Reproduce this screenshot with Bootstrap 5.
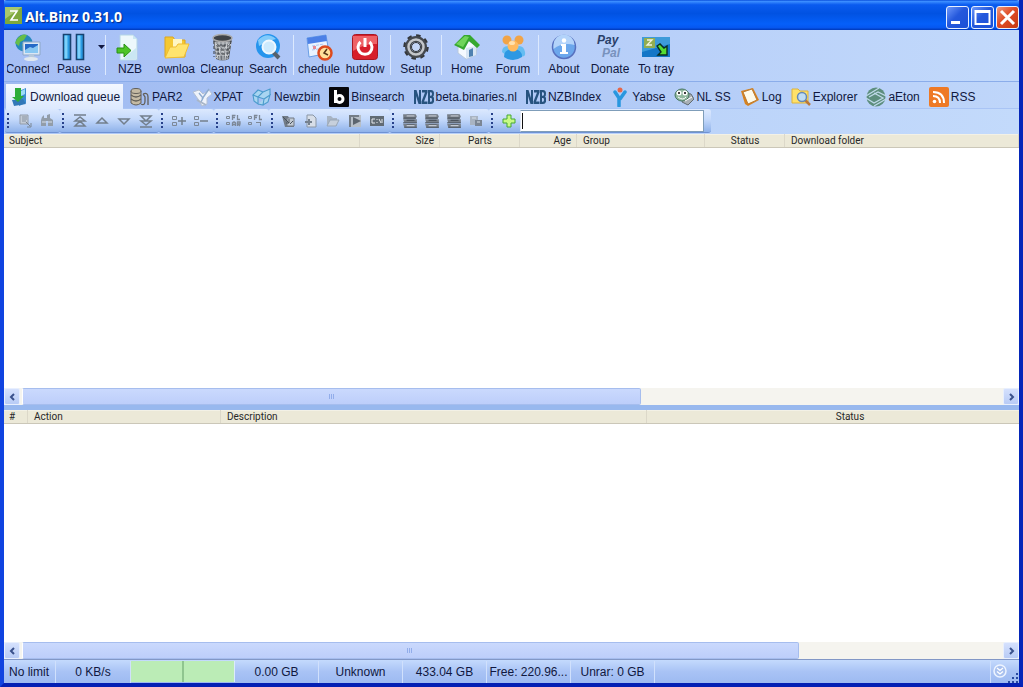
<!DOCTYPE html>
<html lang="en">
<head>
<meta charset="utf-8">
<meta name="viewport" content="width=device-width, initial-scale=1">
<title>Alt.Binz 0.31.0</title>
<link href="https://cdn.jsdelivr.net/npm/bootstrap@5.3.0/dist/css/bootstrap.min.css" rel="stylesheet">
<style>
body{font:12px/16px "Liberation Sans",Arial,sans-serif;color:#101840;background:#0a35d0}
.app-window{border:4px solid #0831d9;border-top:0;border-left-color:#1043e0;border-right-color:#0526b8;border-bottom-color:#0420b4;background:#b4cdf9}
.title-bar{height:30px;margin:0 -4px;padding:0 4px 0 5px;background:linear-gradient(#0a4fdc 0,#3a8cff 5%,#0a5bef 16%,#0152e2 45%,#0560fa 80%,#0657f0 92%,#0038b8);border-radius:7px 7px 0 0}
.title-text{font:bold 14px/18px "Noto Sans","Open Sans",sans-serif;color:#fff;text-shadow:1px 1px 1px #0a2a80;margin-left:3px}
.win-btns{gap:2px}
.win-btn{width:23px;height:23px;border:1px solid #e8f0ff;border-radius:3px;background:linear-gradient(135deg,#6d98fb,#2458dc 45%,#1c50d6)}
.win-btn.close-btn{background:linear-gradient(135deg,#f09a7c,#df4c25 45%,#c63a12)}
button{border:0;background:none;padding:0;color:inherit}
.main-bar{height:51px;padding:3px 1px 0;background:linear-gradient(90deg,#a6bff5,#c2d9fb)}
.tool{width:46px;padding:0 2px;height:47px}
.tool svg{width:30px;height:30px}
.tool-label{width:42px;height:16px;line-height:12px}
.bar-sep{width:1px;height:40px;margin:2px 2px 0;background:#dce9fe}
.bar-sep.after-menu{margin:2px 1px 0 0}
.drop-btn{width:8px;height:28px}
.tab-strip{height:28px;padding:2px 2px 0;gap:5px;background:linear-gradient(90deg,#9fbaf1,#bfd6fa);border-top:1px solid #8badea;border-bottom:1px solid #a9c4f5}
.tab-item{padding:2px;gap:2px;color:#101840;text-decoration:none;height:25px}
.tab-item.current{background:linear-gradient(#f4f8ff,#dde9fe);padding-right:3px}
.tab-item svg{width:20px;height:20px}
.sub-strip{height:25px;padding:0 1px;background:linear-gradient(90deg,#abc6f6,#c3dafb)}
.sub-group{height:24px;padding:0 2px 0 9px;border-radius:2px 3px 3px 2px;background:linear-gradient(#dce9fe,#c4d9fb 45%,#8fb2ea);border-bottom:1px solid #6f92d4;position:relative}
.sub-group::before{content:"";position:absolute;left:2px;top:4px;bottom:4px;border-left:2px dotted #27418a}
.sub-group button{width:22px;height:22px}
.sub-group svg{width:16px;height:16px}
.search-box{width:184px;height:22px;border:1px solid #7f9db9;border-left-color:#e0e8f8;padding:0 2px;margin-right:5px;outline:0;caret-color:transparent;background:linear-gradient(#101010,#101010) 1px 2px/1px 16px no-repeat #fff}
.grid-head{table-layout:fixed;border-collapse:separate;border-spacing:0;color:#282828;font:10px/12px Roboto,"Liberation Sans",sans-serif}
.grid-head th{font-weight:400;height:14px;padding:1px 6px 0;background:#ece9d8;border-bottom:1px solid #cbc7b8;box-shadow:inset -1px 0 #dcd8c9,inset 0 1px #f3f1e6}
.grid-head th:first-child{padding-left:5px}
.c80{width:80px}.c57{width:57px}.c128{width:128px}.c356{width:356px}.c24{width:24px}.c193{width:193px}.c426{width:426px}.c406{width:406px}
.wide-table{width:1049px}
.queue-pane{flex:254 1 0}.log-pane{flex:232 1 0}
.scroll-row{height:17px;background:#f5f4ef}
.scroll-btn{width:16px;height:17px;background:linear-gradient(#d5e1fd,#b8cbf6);border:1px solid #e8effe;border-radius:2px}
.thumb{height:17px;margin-left:2px;background:linear-gradient(#cad9fd,#bdcefa);border:1px solid #a6bdee;border-left-color:#fff;border-radius:2px}
.thumb-queue{width:63%}.thumb-log{width:79%}
.thumb i{width:1px;height:5px;background:#92adea;margin-right:1px}
.splitter{height:5px;background:#98b8ee}
.status-bar{height:24px;border-top:1px solid #8297c6;background:linear-gradient(#c4dafd,#a9c3f5 50%,#9dbaf1)}
.stat{width:84px;line-height:22px;border-right:1px solid #d0e0fc}
.stat.first-stat{width:52px;padding-left:5px}.stat.speed-stat{width:75px}
.meter{width:104px;height:21px;background:linear-gradient(90deg,#bbecb6 50%,#8fc58f 50%,#8fc58f 51%,#bbecb6 51%);border-right:1px solid #dcebfc}
.end-box{border-left:1px solid #d0e0fc}
</style>
</head>
<body>
<svg class="d-none">
 <symbol id="lib" viewBox="1 1 14 14"><path d="M2 2h11l1 2-1 2h-10l-1-2zM2 6.500h12v3H3zM2 10.500h12v3.500H3z" fill="#777f89"/><path d="M2 5.500h11M2 9.500h12M3 13.500h11M5 3h7M5 7.500h7M5 11.500h7" stroke="#4d555f"/><path d="M5 3.500h7M5 12h7" stroke="#c3c9d2"/></symbol>
 <symbol id="nzb" viewBox="0 0 20 20"><path d="M0 3h2.500L5 11V3h2v14H4.500L2 9v8H0zM8 3h5.500v2.500L10 14.500h3.500V17H7.500v-2.500L11 5.500H8z" fill="#27537f"/><path d="M14 3h3q3 0 3 3.500 0 2.500-1 3 1.200.8 1.200 3.500 0 4-3.200 4h-3zM16 5.300v3.400h1q1 0 1-1.700t-1-1.700zM16 11v3.700h1q1 0 1-1.900T17 11z" fill="#27537f" fill-rule="evenodd"/></symbol>
 <symbol id="blocks" viewBox="0 0 16 16"><path d="M1.500 3.500h4v3h-4zM1.500 9.500h4v3h-4z" fill="none" stroke="#7d8897"/></symbol>
 <symbol id="letters" viewBox="0 0 16 16"><path d="M.5 3.500h3v2h-3zM.5 9.500h3v2h-3z" fill="none" stroke="#7d8897"/><path d="M6.500 7V2.500h3M6.500 4.500h2.500M11.500 2v4.500H14" fill="none" stroke="#7d8897" stroke-width="1.300"/></symbol>
</svg>
<main class="app-window d-flex flex-column vh-100 overflow-hidden">
<header class="title-bar d-flex align-items-center flex-shrink-0">
 <svg width="17" height="17" viewBox="0 0 17 17"><path d="M0 0h17v17H0z" fill="#7ea83d"/><path d="M0 0h17L0 12z" fill="#a8c76e"/><path d="M5 4h7L6 13h7" fill="none" stroke="#fff" stroke-width="1.600"/></svg>
 <h1 class="title-text mb-0 mt-1 flex-grow-1">Alt.Binz 0.31.0</h1>
 <div class="win-btns d-flex pt-1">
  <button class="win-btn d-flex" aria-label="Minimize"><svg width="21" height="21"><path d="M4 14h9v3H4z" fill="#fff"/></svg></button>
  <button class="win-btn d-flex" aria-label="Maximize"><svg width="21" height="21"><path d="M3.500 4h14v13h-14z" fill="none" stroke="#fff" stroke-width="2"/><path d="M3 4.500h15" stroke="#fff" stroke-width="3"/></svg></button>
  <button class="win-btn close-btn d-flex" aria-label="Close"><svg width="21" height="21"><path d="M4 4l13 13M17 4L4 17" stroke="#fff" stroke-width="3"/></svg></button>
 </div>
</header>

<nav class="main-bar d-flex flex-shrink-0" aria-label="Main toolbar">
 <button class="tool d-flex flex-column align-items-center"><svg viewBox="0 0 30 30"><circle cx="11" cy="10" r="8.500" fill="#2688bd"/><path d="M4 6q5-6 10-4l-3 5-4 2-1 4-4-3zM9 11l5 2-2 5z" fill="#67bd49"/><path d="M10 9h17v13H10z" fill="#dbe7f4" stroke="#8ea7c8"/><path d="M12 11h13v9H12z" fill="#2469c6"/><path d="M12 17l5-3 3 1 5-3v8H12z" fill="#88c7f2"/><path d="M16 22h5l1 3h-7z" fill="#b7c9db"/><ellipse cx="18" cy="26" rx="7" ry="2" fill="#e1e8ef"/></svg><span class="tool-label d-flex justify-content-center overflow-hidden text-nowrap"><span>Connect</span></span></button>
 <button class="tool d-flex flex-column align-items-center"><svg viewBox="0 0 30 30"><path d="M4.500 1.500h7v25h-7zM17.500 1.500h7v25h-7z" fill="#2a9be3" stroke="#174370" stroke-width="1.600"/><path d="M5.500 2.500h3v23h-3zM18.500 2.500h3v23h-3z" fill="#7bd0fa"/></svg><span class="tool-label d-flex justify-content-center"><span>Pause</span></span></button>
 <button class="drop-btn" aria-label="Pause options"><svg width="7" height="5"><path d="M0 0h7L3.500 4z" fill="#101840"/></svg></button><span class="bar-sep after-menu"></span>
 <button class="tool d-flex flex-column align-items-center"><svg viewBox="0 0 30 30"><path d="M5 2h13l4 4v21H5z" fill="#edf8fc" stroke="#b3d5e6"/><path d="M18 2v4h4M8 26l13-11v11z" fill="#cae7f3"/><path d="M2 15h7v-4l7 6.500-7 6.500v-4H2z" fill="#4ec427" stroke="#289015"/></svg><span class="tool-label d-flex justify-content-center"><span>NZB</span></span></button>
 <button class="tool d-flex flex-column align-items-center" title="Downloads"><svg viewBox="0 0 30 30"><path d="M4 4h8l2 3h10v17H4z" fill="#f4c832" stroke="#dda51c"/><path d="M12 6h9v8h-9z" fill="#fff6c2"/><path d="M4 25l5-11h6l2-3h11l-5 13z" fill="#ffe46e" stroke="#efbd32"/></svg><span class="tool-label d-flex justify-content-center text-nowrap"><span>ownloa</span></span></button>
 <button class="tool d-flex flex-column align-items-center"><svg viewBox="0 0 30 30"><path d="M6 5h19l-3 21q-7 3-13 0z" fill="#6b7077"/><path d="M8 9l3 17M12 9l1 18M16 9v18M20 9l-2 18M24 9l-4 17M7 10h17M7 14h16M8 18h15M8 22h14M8 26l14-15M9 11l13 14" stroke="#d0d3d6"/><path d="M7 8v16M24 8l-3 17M10 13h11M9 17h13M10 21h11" stroke="#34383c" stroke-dasharray="3 2"/><ellipse cx="15.500" cy="5" rx="9.500" ry="3.500" fill="#3f4347" stroke="#aaa" stroke-width="1.500"/></svg><span class="tool-label d-flex justify-content-center overflow-hidden text-nowrap"><span>Cleanup</span></span></button>
 <button class="tool d-flex flex-column align-items-center"><svg viewBox="0 0 30 30"><circle cx="15" cy="13" r="12" fill="#2695ed"/><path d="M5 7q9-9 18-1l-7 2-10 5z" fill="#83cbfa"/><path d="M20 19l6 6" stroke="#56616d" stroke-width="4"/><circle cx="16" cy="14" r="6.500" fill="#cdeafd" stroke="#eef8ff" stroke-width="2"/></svg><span class="tool-label d-flex justify-content-center"><span>Search</span></span></button>
 <span class="bar-sep"></span>
 <button class="tool d-flex flex-column align-items-center" title="Scheduler"><svg viewBox="0 0 30 30"><path d="M3 5l19-3 3 18-20 4z" fill="#e9f3ff" stroke="#6a9fe6"/><path d="M3 5l19-3 1 6L4 11z" fill="#4c80e6"/><path d="M8 13l12-2M8 17l12-2" stroke="#aec5ed" stroke-dasharray="3 1"/><path d="M9 13h3v3H9z" fill="#e58a96"/><circle cx="21" cy="20" r="6.500" fill="#ffe09b" stroke="#dc4b1e" stroke-width="2.500"/><path d="M23 16l-3 4 4 2" fill="none" stroke="#563519" stroke-width="1.500"/></svg><span class="tool-label d-flex justify-content-center text-nowrap"><span>chedule</span></span></button>
 <button class="tool d-flex flex-column align-items-center" title="Shutdown"><svg viewBox="0 0 30 30"><rect x="2.500" y="1.500" width="25" height="25" rx="3" fill="#d71f2b" stroke="#a71824"/><path d="M3 3h24v8Q15 10 3 18z" fill="#ee6267"/><path d="M10.500 9a7 7 0 1 0 9 0M15 5v9" fill="none" stroke="#fff" stroke-width="3"/></svg><span class="tool-label d-flex justify-content-center text-nowrap"><span>hutdow</span></span></button>
 <span class="bar-sep"></span>
 <button class="tool d-flex flex-column align-items-center"><svg viewBox="0 0 30 30"><circle cx="15" cy="14" r="11" fill="none" stroke="#33363a" stroke-width="3.500" stroke-dasharray="4.300 4.300"/><circle cx="15" cy="14" r="8" fill="none" stroke="#45494e" stroke-width="6"/><circle cx="15" cy="14" r="7.500" fill="none" stroke="#c4c7cb" stroke-width="2.500"/><circle cx="15" cy="14" r="4.500" fill="#c4d6f7" stroke="#333"/></svg><span class="tool-label d-flex justify-content-center"><span>Setup</span></span></button>
 <span class="bar-sep"></span>
 <button class="tool d-flex flex-column align-items-center"><svg viewBox="0 0 30 30"><path d="M6 12l9-5 10 6-1 9-10 4-8-6z" fill="#f5f9ff" stroke="#b9c9dc"/><path d="M14 15v11l10-4v-9z" fill="#d9e6f4"/><path d="M17 17l4-2v8l-4 1z" fill="#4f81b0"/><path d="M2 12L12 2l6 0 10 10-3 3-8-7-5 9z" fill="#36a82f"/><path d="M4 11l9-8 4 1-6 10z" fill="#70d45a"/></svg><span class="tool-label d-flex justify-content-center"><span>Home</span></span></button>
 <button class="tool d-flex flex-column align-items-center"><svg viewBox="0 0 30 30"><path d="M4 19q0-6 6-6t5 6-5 4-6-4M16 19q0-6 5-6t6 6-5 4-6-4" fill="#65bdf1"/><circle cx="9" cy="7" r="4.500" fill="#f1a447"/><circle cx="21" cy="7" r="4.500" fill="#f1a447"/><path d="M6 24q0-8 9-8t9 8q-9 6-18 0" fill="#2d98e3"/><circle cx="15" cy="13" r="5.500" fill="#ffba60"/><ellipse cx="14" cy="10" rx="3" ry="2" fill="#ffe0ad"/></svg><span class="tool-label d-flex justify-content-center"><span>Forum</span></span></button>
 <span class="bar-sep"></span>
 <button class="tool d-flex flex-column align-items-center"><svg viewBox="0 0 30 30"><circle cx="15" cy="14" r="11.500" fill="#6ca7ec" stroke="#5770be" stroke-width="1.500"/><path d="M4.500 12a10.500 10.500 0 0 1 21 0q-12-3-21 4z" fill="#b3d3fa"/><circle cx="15" cy="7.500" r="2.200" fill="#fff"/><path d="M12 11h5v8h2v2h-8v-2h2v-6h-1z" fill="#fff"/></svg><span class="tool-label d-flex justify-content-center"><span>About</span></span></button>
 <button class="tool d-flex flex-column align-items-center"><svg viewBox="0 0 30 30" font-family="Liberation Sans,sans-serif" font-size="12" font-weight="bold" font-style="italic"><text x="2" y="11" fill="#293f69">Pay</text><text x="7" y="24" fill="#7892bd">Pal</text></svg><span class="tool-label d-flex justify-content-center"><span>Donate</span></span></button>
 <button class="tool d-flex flex-column align-items-center"><svg viewBox="0 0 30 30"><path d="M1 4h28v20H1z" fill="#1476c7"/><path d="M1 4h28v7L1 19z" fill="#3d9bd9"/><path d="M3 5h11v10H3z" fill="#92ad50"/><path d="M6 7h5l-5 5h5" fill="none" stroke="#f3f5dd" stroke-width="1.300"/><path d="M16 13l3-2 4 4 3-2v9h-9l3-3z" fill="#54dc31" stroke="#092e20" stroke-width="1.400"/></svg><span class="tool-label d-flex justify-content-center text-nowrap"><span>To tray</span></span></button>
</nav>

<nav class="tab-strip d-flex flex-shrink-0 text-nowrap" aria-label="Views">
 <a href="#" class="tab-item current d-flex align-items-center" aria-current="page"><svg viewBox="0 0 20 20"><path d="M11 4l7-3v15l-7 3z" fill="#3a8bd0"/><path d="M4 13l11-1 3 5-12 2z" fill="#3278b8"/><path d="M13 4l4-2v5l-4 2z" fill="#9bdcf7"/><path d="M7 1h6v8h3l-6 6-6-5h3z" fill="#2dad38"/></svg><span>Download queue</span></a>
 <a href="#" class="tab-item d-flex align-items-center"><svg viewBox="0 0 20 20"><g fill="#c4baa4" stroke="#625f58"><path d="M1 4v12q5 4 10 0V4z"/><ellipse cx="6" cy="4" rx="5" ry="2.500"/><path d="M1 8q5 4 10 0M1 12q5 4 10 0M13 7q5-2 5 3v8M11 17q4 2 4-3v-4l-2-3" fill="none" stroke-width="1.300"/></g></svg><span>PAR2</span></a>
 <a href="#" class="tab-item d-flex align-items-center"><svg viewBox="0 0 20 20"><path d="M1 5l6-2 4 4 6-4 3 4-5 4v6l-5 2-4-7z" fill="#eef3fb" stroke="#b4c0d3"/><path d="M7 6l4 5-2 4M17 2l-7 10" fill="none" stroke="#8eacd0" stroke-width="1.400"/><path d="M5 13l9 5" stroke="#a9b6c8" stroke-width="2"/></svg><span>XPAT</span></a>
 <a href="#" class="tab-item d-flex align-items-center"><svg viewBox="0 0 20 20"><path d="M1 8l5-5 5 2-5 5zM6 10v7l-4-3-1-6M11 5l7-3v6l-6 4-6-2M12 12l-1 6-5-1M12 12l6-4-2 7-5 3" fill="#a8d5f1" stroke="#4b9bcd" stroke-width="1.100"/></svg><span>Newzbin</span></a>
 <a href="#" class="tab-item d-flex align-items-center"><svg viewBox="0 0 20 20"><rect width="20" height="20" rx="1" fill="#06070b"/><path d="M5 3h3v13H5z" fill="#fff"/><circle cx="10.500" cy="12" r="3.500" fill="none" stroke="#fff" stroke-width="3"/></svg><span>Binsearch</span></a>
 <a href="#" class="tab-item d-flex align-items-center"><svg><use href="#nzb"/></svg><span>beta.binaries.nl</span></a>
 <a href="#" class="tab-item d-flex align-items-center"><svg><use href="#nzb"/></svg><span>NZBIndex</span></a>
 <a href="#" class="tab-item d-flex align-items-center"><svg viewBox="0 0 20 20"><path d="M5 5l4 6v8M15 5l-5 7" stroke="#2897df" stroke-width="3.500" stroke-linecap="round" fill="none"/><circle cx="10" cy="3" r="2.500" fill="#e66749"/></svg><span>Yabse</span></a>
 <a href="#" class="tab-item d-flex align-items-center"><svg viewBox="0 0 20 20"><path d="M11 6l6 1 3 5-6 6-6-3z" fill="#a8b0b5" stroke="#616b72"/><ellipse cx="8" cy="8" rx="7" ry="6" fill="#91b99f" stroke="#477660"/><circle cx="5" cy="6" r="2.500" fill="#fff"/><circle cx="11" cy="6" r="2.500" fill="#fff"/><circle cx="5" cy="6" r="1"/><circle cx="11" cy="6" r="1"/><path d="M4 10q5 4 8 0M11 14l7-4" fill="none" stroke="#fff"/></svg><span>NL SS</span></a>
 <a href="#" class="tab-item d-flex align-items-center"><svg viewBox="0 0 20 20"><path d="M1 4l12-3 6 12-11 6-3-2z" fill="#d8821d"/><path d="M3 5l9-3 5 11-9 4z" fill="#fffbea" stroke="#bb7c35"/></svg><span>Log</span></a>
 <a href="#" class="tab-item d-flex align-items-center"><svg viewBox="0 0 20 20"><path d="M1 2h6l2 2h8v12H1z" fill="#ffe169" stroke="#deb33a"/><path d="M14 13l5 5" stroke="#b9783b" stroke-width="2.500"/><circle cx="11" cy="10" r="4.500" fill="#bfddf5" stroke="#6589b6" stroke-width="1.500"/></svg><span>Explorer</span></a>
 <a href="#" class="tab-item d-flex align-items-center"><svg viewBox="0 0 20 20"><circle cx="10" cy="10" r="9.500" fill="#5d8e7e"/><path d="M0 9L13 1M3 10l9-5 8 4M0 11l8 5 9-5-9-5M8 19l12-7" fill="none" stroke="#bfd9e9" stroke-width="1.300"/></svg><span>aEton</span></a>
 <a href="#" class="tab-item d-flex align-items-center"><svg viewBox="0 0 20 20"><rect width="20" height="20" rx="2" fill="#ee7925"/><circle cx="5.500" cy="14.500" r="1.800" fill="#fff"/><path d="M4 9q7 0 7 7M4 5q11 0 11 11" fill="none" stroke="#fff" stroke-width="2"/></svg><span>RSS</span></a>
</nav>

<div class="sub-strip d-flex flex-shrink-0" role="toolbar" aria-label="Queue tools">
 <div class="sub-group d-flex align-items-center">
  <button aria-label="Properties"><svg viewBox="0 0 16 16"><path d="M3 2h8v9H3z" fill="#c3cbd6" stroke="#929ba8"/><path d="M5 4h5M5 6h5M5 8h4" stroke="#8893a1"/><path d="M9 9l4 4m1-3v4h-4" stroke="#7b8591" fill="none"/></svg></button>
  <button aria-label="Find"><svg viewBox="0 0 16 16"><path d="M3 4l2-2v3h3V2l3-1v4l3 2v6H9V8H7v5H2V7z" fill="#929da9"/><path d="M3 9h4M9 9h4" stroke="#d8e0ea"/></svg></button>
 </div>
 <div class="sub-group d-flex align-items-center">
  <button aria-label="Move to top"><svg viewBox="0 0 16 16" fill="none" stroke="#737f8c" stroke-width="1.500"><path d="M2 2h12M8 4L3 8h10zM8 8l-5 5h10z"/></svg></button>
  <button aria-label="Move up"><svg viewBox="0 0 16 16"><path d="M8 5l-5 5h10z" fill="none" stroke="#737f8c" stroke-width="1.500"/></svg></button>
  <button aria-label="Move down"><svg viewBox="0 0 16 16"><path d="M8 11L3 6h10z" fill="none" stroke="#737f8c" stroke-width="1.500"/></svg></button>
  <button aria-label="Move to bottom"><svg viewBox="0 0 16 16" fill="none" stroke="#737f8c" stroke-width="1.500"><path d="M2 14h12M8 12L3 8h10zM8 8L3 3h10z"/></svg></button>
 </div>
 <div class="sub-group d-flex align-items-center">
  <button aria-label="Expand all"><svg viewBox="0 0 16 16"><use href="#blocks"/><path d="M7 8h8M11 4v8" stroke="#737f8c" stroke-width="1.500"/></svg></button>
  <button aria-label="Collapse all"><svg viewBox="0 0 16 16"><use href="#blocks"/><path d="M7 8h8" stroke="#737f8c" stroke-width="1.500"/></svg></button>
 </div>
 <div class="sub-group d-flex align-items-center">
  <button aria-label="Filter all"><svg viewBox="0 0 16 16"><use href="#letters"/><path d="M6.500 13v-3q1.500-2 3 0v3M6.500 11.500h3M11.500 13V9H14v2h-2l2 2" fill="none" stroke="#7d8897" stroke-width="1.300"/></svg></button>
  <button aria-label="Filter one"><svg viewBox="0 0 16 16"><use href="#letters"/><path d="M8 9.500h4M12.500 9v4" stroke="#7d8897"/></svg></button>
 </div>
 <div class="sub-group d-flex align-items-center">
  <button aria-label="Import"><svg viewBox="0 0 16 16"><path d="M1 3h6l1 2h5v9H4z" fill="#727c87"/><path d="M6 5h7v8H6z" fill="#c2cad3" stroke="#707984"/><path d="M2 4l6 6M8 6v4H5M9 11l3-3" fill="none" stroke="#48525d"/></svg></button>
  <button aria-label="Add file"><svg viewBox="0 0 16 16"><path d="M4 2h6l3 3v9H4z" fill="#d7dee8" stroke="#8a96a5"/><path d="M2 9h7M6 6v6" stroke="#75818f" stroke-width="2"/></svg></button>
  <button aria-label="Open folder"><svg viewBox="0 0 16 16"><path d="M2 3h4l2 2h4v8H2z" fill="#a8b4c3"/><path d="M5 7h9l-3 6H2z" fill="#c7d0dc" stroke="#99a7b7"/></svg></button>
  <button aria-label="Run"><svg viewBox="0 0 16 16"><path d="M2 2h12v12H2z" fill="#b7bfc8"/><path d="M3 2v12M2 3h10" stroke="#747d86" stroke-width="2"/><path d="M6 4l8 4-8 4z" fill="#5c656e"/></svg></button>
  <button aria-label="Command line"><svg viewBox="0 0 16 16"><path d="M1 3h14v10H1z" fill="#616b74"/><path d="M6 6H3v4h3M8 6v1m0 2v1m2-4l2 4m1-4v4" fill="none" stroke="#e5e9ed"/></svg></button>
 </div>
 <div class="sub-group d-flex align-items-center">
  <button aria-label="Sort by name"><svg><use href="#lib"/></svg></button><button aria-label="Sort by size"><svg><use href="#lib"/></svg></button><button aria-label="Sort by age"><svg><use href="#lib"/></svg></button>
  <button aria-label="Copy"><svg viewBox="0 0 16 16"><path d="M2 3h8v9H2z" fill="#a9b4c2"/><path d="M7 7h7v6H7z" fill="#7b8694"/><path d="M4 5h4M9 9h3" stroke="#d7dfe8"/></svg></button>
 </div>
 <div class="sub-group d-flex align-items-center">
  <button aria-label="Add"><svg viewBox="0 0 16 16"><path d="M6 2h4v4h4v4h-4v4H6v-4H2V6h4z" fill="#c8fa86" stroke="#45a832"/></svg></button>
  <input class="search-box" type="text" aria-label="Search queue">
 </div>
</div>

<section class="queue-pane d-flex flex-column bg-white overflow-hidden">
 <table class="grid-head w-100"><thead><tr><th class="c356">Subject</th><th class="c80 text-end">Size</th><th class="c80 text-center">Parts</th><th class="c57 text-end">Age</th><th class="c128">Group</th><th class="c80 text-center">Status</th><th>Download folder</th></tr></thead></table>
</section>
<div class="scroll-row d-flex flex-shrink-0">
 <button class="scroll-btn d-flex align-items-center justify-content-center" aria-label="Scroll left"><svg width="7" height="8"><path d="M5 1L2 4l3 3" fill="none" stroke="#3a518c" stroke-width="2"/></svg></button>
 <div class="flex-grow-1"><div class="thumb thumb-queue d-flex align-items-center justify-content-center"><i></i><i></i><i></i></div></div>
 <button class="scroll-btn d-flex align-items-center justify-content-center" aria-label="Scroll right"><svg width="7" height="8"><path d="M2 1l3 3-3 3" fill="none" stroke="#3a518c" stroke-width="2"/></svg></button>
</div>
<div class="splitter flex-shrink-0"></div>
<section class="log-pane d-flex flex-column bg-white overflow-hidden">
 <table class="grid-head wide-table"><thead><tr><th class="c24">#</th><th class="c193">Action</th><th class="c426">Description</th><th class="c406 text-center">Status</th></tr></thead></table>
</section>
<div class="scroll-row d-flex flex-shrink-0">
 <button class="scroll-btn d-flex align-items-center justify-content-center" aria-label="Scroll log left"><svg width="7" height="8"><path d="M5 1L2 4l3 3" fill="none" stroke="#3a518c" stroke-width="2"/></svg></button>
 <div class="flex-grow-1"><div class="thumb thumb-log d-flex align-items-center justify-content-center"><i></i><i></i><i></i></div></div>
 <button class="scroll-btn d-flex align-items-center justify-content-center" aria-label="Scroll log right"><svg width="7" height="8"><path d="M2 1l3 3-3 3" fill="none" stroke="#3a518c" stroke-width="2"/></svg></button>
</div>
<footer class="status-bar d-flex align-items-center flex-shrink-0 text-nowrap">
 <span class="stat first-stat">No limit</span><span class="stat speed-stat text-center">0 KB/s</span><span class="meter"></span>
 <span class="stat text-center">0.00 GB</span><span class="stat text-center">Unknown</span><span class="stat text-center">433.04 GB</span><span class="stat text-center">Free: 220.96...</span><span class="stat text-center">Unrar: 0 GB</span>
 <div class="end-box d-flex align-items-end ms-auto"><svg width="28" height="22" viewBox="0 0 28 22"><circle cx="9" cy="10" r="6" fill="#a9c1ef" stroke="#edf4ff" stroke-width="1.500"/><path d="M6 7l3 2.500L12 7M6 10.500L9 13l3-2.500" fill="none" stroke="#fff" stroke-width="1.300"/><path d="M25 12h2v2h-2zM21 16h2v2h-2zM25 16h2v2h-2zM17 20h2v2h-2zM21 20h2v2h-2zM25 20h2v2h-2z" fill="#284aa0"/></svg></div>
</footer>
</main>
<script src="https://cdn.jsdelivr.net/npm/bootstrap@5.3.0/dist/js/bootstrap.bundle.min.js"></script>
</body>
</html>
